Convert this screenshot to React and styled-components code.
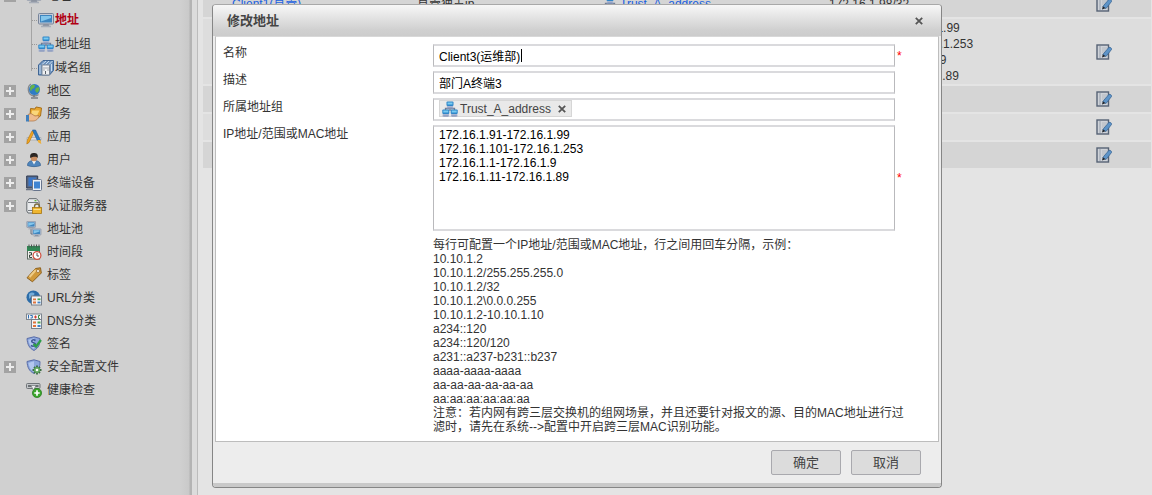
import React from "react";
import styled, { createGlobalStyle, css } from "styled-components";

const GlobalStyle = createGlobalStyle`
  * { box-sizing: border-box; }
  body {
    margin: 0;
    background: #e4e4e4;
    color: #333;
    font: 12px/14px "Liberation Sans", "Noto Sans CJK SC", sans-serif;
    overflow: hidden;
  }
`;

/* ---------- icons ---------- */

const Svg = styled.svg`
  display: block;
  flex: none;
  width: 16px;
  height: 16px;
`;

const Monitor = ({ x = 0, y = 0, s = 1 }) => (
  <g transform={`translate(${x} ${y}) scale(${s})`}>
    <rect x=".5" y="1.500" width="15" height="10.500" rx="1" fill="#c3cad6" stroke="#77849a" />
    <rect x="2" y="3" width="12" height="7.500" fill="#3f86bf" />
    <path d="M3 4h10v2L3 9.500z" fill="#84c6ec" />
    <path d="M5.500 12h5l1 2h-7z" fill="#8c93a0" />
    <path d="M3 14.500h10" stroke="#a7adb8" strokeWidth="1.500" />
  </g>
);

const MiniHost = ({ x, y }) => (
  <g transform={`translate(${x} ${y})`}>
    <rect width="7" height="4.500" rx="1" fill="#2f86c8" />
    <rect x="1" y="1" width="5" height="2" fill="#79cbf2" />
    <path d="M.5 4.500h6l.5 2.500H0z" fill="#a9b6d2" />
    <path d="M1 6.500h5" stroke="#7283ae" strokeWidth=".8" />
  </g>
);

const Shield = () => (
  <>
    <path d="M1 2.500 8 .8l6 1.700c0 6-1 9-6 12C3 12 1.500 8.500 1 2.500z" fill="#8ba6dc" stroke="#5a6da8" />
    <path d="M2.500 4 8 2.300V13C4.500 11 3 8 2.500 4z" fill="#b3c7ee" />
  </>
);

const drawings = {
  monitor: <Monitor />,
  hosts: (
    <>
      <path d="M8 7v3M3.500 9V7.500h9V9" stroke="#6f7c92" strokeWidth="1.300" fill="none" />
      <MiniHost x={4.5} y={0.5} />
      <MiniHost x={0.3} y={8.5} />
      <MiniHost x={8.7} y={8.5} />
    </>
  ),
  domains: (
    <>
      <path d="M.5 5 5 .500h10.500v10l-4 4.500H.5z" fill="#6f93bd" stroke="#3f6594" />
      <path d="M2 5v9M4 4.500l4-3.500M7.500 4.500l3.500-3.500M11 4.500l3.500-3.500M13.500 4v7" stroke="#c9dcf0" />
      <path d="M4 5h7.500v10H4z" fill="#eef0f3" stroke="#7b8696" />
      <path d="M5.500 8h1M7.500 8h1M9.500 8h1M5.500 10h1M9.500 10h1M7.500 11v3" stroke="#5a6068" />
    </>
  ),
  globe: (
    <>
      <path d="M5 1C1 3 1 12 8 13c2 0 3.500-.5 4.500-1.500" fill="none" stroke="#84888e" strokeWidth="1.300" />
      <circle cx="8.500" cy="6.500" r="5.500" fill="#2f7cc4" />
      <path d="M5 3c2-2 4-1 4 0L8 5 6 6 5 8.500C3.500 6 4 4 5 3zM10 5l3-1c.8 2.500 0 4.500-2 6L9 7.500z" fill="#67b347" />
      <path d="M8 12v2M5 15h7" stroke="#777c82" strokeWidth="1.700" />
    </>
  ),
  service: (
    <>
      <path d="M4.500 2.500l4.500.5 1-2 5.500 1-1 8-5 3.500-5.500-3z" fill="#e9a72f" stroke="#a8701a" />
      <path d="M6 4.500h7.500l-2.500 5H5z" fill="#fad67a" />
      <path d="M2 8.500l3-1 4 2.500 4-.5c0 3-3 5.500-6 5.500H2z" fill="#eebb8e" stroke="#a97446" strokeWidth=".7" />
      <path d="M0 9h3v6.500H0z" fill="#3f7fbd" />
    </>
  ),
  app: (
    <>
      <path d="M1 8.500h14v2.500H1z" fill="#dfe2e6" stroke="#999fa6" strokeWidth=".6" />
      <path d="M8 3 3 13.500 .8 15l.4-3.500L6 2z" fill="#f1a51e" stroke="#b0700c" strokeWidth=".6" />
      <path d="M6.500 1H9.500l5 10.500h-3.200z" fill="#2d7cc2" stroke="#1e5690" strokeWidth=".6" />
      <path d="M11.300 11h3.300l.7 4-3-1.500z" fill="#efb03a" />
    </>
  ),
  user: (
    <>
      <path d="M1.500 13.500c0-3.500 2.500-5 6.500-5s6.500 1.500 6.500 5c-3 1.500-10 1.500-13 0z" fill="#4f86bd" stroke="#2f5b8d" strokeWidth=".7" />
      <path d="M6 9l2 3.500L10 9z" fill="#f2f2f2" />
      <circle cx="8" cy="6" r="3.300" fill="#c98d62" />
      <path d="M4.300 6C3.500 2 5.500 1 8 1s4.500 1 3.700 5C10.500 4 7 4.500 4.300 6z" fill="#2b2623" />
    </>
  ),
  terminal: (
    <>
      <path d="M.7 1h11v12H.7z" fill="#5a6a86" stroke="#2c3850" />
      <path d="M2.500 2.500h7.500v8.500H2.500z" fill="#3a76c8" />
      <path d="M0 14.500h8" stroke="#6b7382" strokeWidth="1.500" />
      <rect x="6.500" y="4.500" width="9" height="11" rx="1" fill="#eceff4" stroke="#67748c" />
      <path d="M8 6.500h6v7H8z" fill="#3f84d2" />
    </>
  ),
  auth: (
    <>
      <path d="M3 .7h7.500l2.500 3v8.300l-2 3H2L.8 13V4z" fill="#e8eaec" stroke="#63686d" />
      <path d="M2 4.500h10M2 12.500h9" stroke="#777c81" />
      <path d="M8.500 2.700h2" stroke="#58b536" strokeWidth="1.300" />
      <path d="M8.500 10V8.500a2.500 2.500 0 0 1 5 0V10" fill="none" stroke="#7d6d40" strokeWidth="1.300" />
      <rect x="6.500" y="9.500" width="9" height="6" fill="#efb62f" stroke="#a77512" strokeWidth=".8" />
      <path d="M7.500 11.500h7" stroke="#fbdf8b" />
    </>
  ),
  pool: (
    <>
      <path d="M5 8v5h3" fill="none" stroke="#697380" />
      <Monitor x={0.500} y={-0.5} s={0.58} />
      <Monitor x={6} y={7} s={0.58} />
    </>
  ),
  calendar: (
    <>
      <rect x="1.500" y="2.500" width="12" height="12.500" fill="#f2f2ef" stroke="#5d6a61" />
      <path d="M1 2h13v5H1z" fill="#2f8753" />
      <path d="M3 .5v3M5.500.5v3M8 .5v3M10.500.5v3M13 .5v3" stroke="#4b5450" />
      <path d="M3 8.700h2.500v2.300H3.500v2.500H6" fill="none" stroke="#38463e" />
      <circle cx="11" cy="11.500" r="3.900" fill="#fff" stroke="#cf4c3c" strokeWidth="1.200" />
      <path d="M11 9v3h2" fill="none" stroke="#555" />
    </>
  ),
  tag: (
    <>
      <path d="M9.500 1.500 14.500.8 15.300 6 6.500 14.800l-5.500-4z" fill="#d19a3c" stroke="#8c5f1c" strokeLinejoin="round" />
      <path d="M9.700 3 3.500 10" stroke="#efcc86" strokeWidth="2" />
      <circle cx="12" cy="4" r="1.500" fill="#fff" stroke="#8c5f1c" strokeWidth=".7" />
    </>
  ),
  url: (
    <>
      <circle cx="7.300" cy="7.300" r="6.800" fill="#2c6ca8" />
      <path d="M3 4c3-3 7-1 5 1L5 7 3 9z" fill="#74acd8" />
      <rect x="5.500" y="6" width="10" height="9" fill="#f3f4f6" stroke="#77808c" />
      <path d="M7 9.300h3M7 12.500h3" stroke="#e0743c" strokeWidth="1.800" />
      <path d="M11.500 9.300h3" stroke="#4ba454" strokeWidth="1.800" />
      <path d="M11.500 12.500h3" stroke="#3d82c8" strokeWidth="1.800" />
    </>
  ),
  dns: (
    <>
      <rect x=".5" y="1" width="15" height="5.500" fill="#f2f3f5" stroke="#7d858f" />
      <path d="M2.500 2v3.500M4.300 2.500h2v2.500H4.500" stroke="#2f6eb5" fill="none" />
      <path d="M8 4h3M9.500 2.500v3" stroke="#d33b30" />
      <path d="M14 2.500h-1.500v3H14" stroke="#3f8c43" fill="none" />
      <rect x="5.500" y="6.500" width="10" height="9" fill="#f3f4f6" stroke="#77808c" />
      <path d="M7 9.500h3M7 13h3" stroke="#e0743c" strokeWidth="2" />
      <path d="M11.500 9.500h3" stroke="#4ba454" strokeWidth="2" />
      <path d="M11.500 13h3" stroke="#3d82c8" strokeWidth="2" />
    </>
  ),
  sign: (
    <>
      <Shield />
      <path d="M9.500 4.500C7 3 5 4.500 6 6l3 1.500c1.500 2-1.500 3.500-4 2" fill="none" stroke="#3d5594" strokeWidth="1.500" />
      <path d="M7.500 8 10 10.500 15 4" fill="none" stroke="#2e9e48" strokeWidth="2.200" />
    </>
  ),
  security: (
    <>
      <Shield />
      <path d="M11 6.500v9M6.500 11h9M8 8l6 6M14 8l-6 6" stroke="#3a6e40" strokeWidth="1.800" />
      <circle cx="11" cy="11" r="3" fill="#62a860" />
      <circle cx="11" cy="11" r="1.300" fill="#fff" />
    </>
  ),
  health: (
    <>
      <rect x=".5" y="1.500" width="13.500" height="5" rx="1" fill="#c2c5c8" stroke="#707579" />
      <path d="M2 4h3M9.500 4h3" stroke="#4f5458" strokeWidth="1.700" />
      <path d="M5 3.500h5L7.500 8.500z" fill="#eceeef" stroke="#707579" strokeWidth=".7" />
      <circle cx="11" cy="11" r="4.600" fill="#3aa62c" stroke="#25781c" strokeWidth=".7" />
      <path d="M11 8.300v5.400M8.300 11h5.400" stroke="#fff" strokeWidth="1.700" />
    </>
  ),
  edit: (
    <>
      <rect x="1" y="1" width="11.500" height="14" fill="#cfd3d9" stroke="#566274" strokeWidth="1.400" />
      <path d="M4 2v12" stroke="#98a0ac" />
      <path d="M6 4h5M6 6h4M6 8h3" stroke="#b4b9c0" />
      <path d="M12.800 3.500c1.500-.5 3 .5 2.700 2L10 12.500 6.800 10.500z" fill="#5e94c8" stroke="#3a6694" strokeWidth=".8" />
      <path d="M6.800 10.300l2.700 2L6 13.500z" fill="#1f242b" />
    </>
  ),
};

const Icon = ({ name }) => (
  <Svg viewBox="0 0 16 16" aria-hidden="true">
    {drawings[name]}
  </Svg>
);

const Cross = styled(({ className }) => (
  <svg className={className} viewBox="0 0 8 8" aria-hidden="true">
    <path d="M.8.8l6.400 6.400M7.200.8.8 7.200" stroke="currentColor" strokeWidth="1.800" />
  </svg>
))`
  display: block;
  width: 8px;
  height: 8px;
`;

/* ---------- page ---------- */

const Page = styled.div`
  display: flex;
  height: 100vh;
  overflow: hidden;
`;

const Sidebar = styled.nav`
  flex: none;
  width: 192px;
  background: linear-gradient(to right, #d0d0d0 180px, #c9c9c9 189px, #b4b4b4 190px);
`;

const Gutter = styled.div`
  flex: none;
  width: 6px;
  background: #dcdcdc;
  border-right: 1px solid #bcbcbc;
`;

const Tree = styled.ul`
  list-style: none;
  margin: -16px 0 0;
  padding: 0;
`;

const Branch = styled.ul`
  list-style: none;
  margin: 0 0 0 31px;
  padding: 0;
`;

const Node = styled.div`
  display: flex;
  align-items: center;
  height: 23px;
  padding-left: 4px;
  gap: 5px;
`;

const Toggle = styled.button`
  flex: none;
  width: 12px;
  height: 12px;
  margin-right: 5px;
  padding: 0;
  border: 0;
  background:
    linear-gradient(#ededed, #ededed) center / 8px 2px no-repeat,
    ${(p) => (p.$open ? "" : "linear-gradient(#ededed, #ededed) center / 2px 8px no-repeat,")}
    #a3a3a3;
`;

const ToggleSpace = styled.span`
  flex: none;
  width: 12px;
  margin-right: 5px;
`;

const Leaf = styled.li`
  display: flex;
  align-items: center;
  gap: 1px;
  height: 24px;
  padding-top: 2px;
  border-left: 1px solid #a4a4a4;
  ${(p) =>
    p.$last &&
    css`
      border-image: linear-gradient(#a4a4a4 16px, transparent 16px) 1;
    `}

  &::before {
    content: "";
    width: 5px;
    border-top: 1px dotted #999;
  }
`;

const NodeLink = styled.a`
  color: ${(p) => (p.$active ? "#b00014" : "#333")};
  font-weight: ${(p) => (p.$active ? "bold" : "normal")};
  text-decoration: none;
  white-space: nowrap;
`;

const Main = styled.main`
  flex: 1;
  min-width: 0;
  padding: 0 1px 0 5px;
`;

const Grid = styled.table`
  width: 100%;
  margin-top: -10px;
  border-collapse: collapse;
  table-layout: fixed;
  line-height: 16px;
`;

const Row = styled.tr`
  height: ${(p) => (p.$tall ? 67 : 28)}px;
  background: ${(p) => (p.$alt ? "#dddddd" : "#d5d5d5")};
  border-bottom: 2px solid #e4e4e4;
`;

const Cell = styled.td`
  padding: 0 0 0 6px;
  vertical-align: middle;
  white-space: nowrap;
`;

const GroupRef = styled.span`
  display: flex;
  align-items: center;
  gap: 2px;
`;

const TableLink = styled.a`
  color: #1a5fe0;
`;

const IconButton = styled.button`
  display: block;
  padding: 0;
  border: 0;
  background: none;
  color: #555;
`;

/* ---------- dialog ---------- */

const Overlay = styled.div`
  position: absolute;
  inset: 0;
  display: flex;
  justify-content: center;
  align-items: flex-start;
  padding: 4px 0 0 2px;
`;

const Dialog = styled.section`
  width: 730px;
  max-width: 100%;
  background: #ededed;
  border: 1px solid #868686;
  border-top-color: #a8a8a8;
  border-radius: 4px;
  overflow: hidden;
`;

const DialogHeader = styled.header`
  display: flex;
  align-items: center;
  justify-content: space-between;
  height: 31px;
  padding: 0 18px 0 14px;
  background: linear-gradient(#f7f7f7, #d0d0d0 80%, #cccccc);
`;

const Title = styled.h1`
  margin: 0;
  color: #444;
  font-size: 13px;
  line-height: 20px;
`;

const Form = styled.form`
  margin: 0;
`;

const Fields = styled.div`
  display: grid;
  grid-template-columns: 210px minmax(0, 1fr) 12px;
  row-gap: 4px;
  margin: 0 2px;
  padding: 7px 31px 7px 7px;
  background: #fff;
  border: 1px solid #bdbdbd;
  border-top-color: #d8d8d8;
`;

const Label = styled.label`
  grid-column: 1;
  line-height: 18px;
`;

const box = css`
  display: block;
  width: 100%;
  border: 1px solid #b9b9bc;
  border-width: 2px 1px;
  border-top-color: #dadadd;
  border-bottom-color: #dadadd;
  border-radius: 0;
  background: #fff;
  color: #000;
  font: inherit;
  outline: none;
`;

const TextInput = styled.input`
  ${box}
  height: 23px;
  padding: 0 5px;
  ${(p) =>
    p.$caret &&
    css`
      caret-color: transparent;
      background: linear-gradient(#000, #000) 87px 3px / 1px 13px no-repeat #fff;
    `}
`;

const TagBox = styled.div`
  ${box}
  height: 23px;
  padding: 0 5px;
`;

const TextArea = styled.textarea`
  ${box}
  height: 106px;
  padding: 1px 5px;
  resize: none;
`;

const Tag = styled.span`
  display: inline-flex;
  align-items: center;
  gap: 2px;
  height: 17px;
  padding: 0 5px 0 2px;
  border: 1px solid #d6d6d6;
  background: #e9e9e9;
  color: #444;

  button {
    margin-left: 5px;
  }
`;

const Required = styled.span`
  align-self: center;
  padding-left: 2px;
  color: #f00;
`;

const Help = styled.div`
  grid-column: 2 / 4;
  padding-top: 3px;

  p {
    margin: 0;
  }
`;

const Footer = styled.footer`
  display: flex;
  justify-content: flex-end;
  gap: 10px;
  padding: 8px 20px 8px;
  border-bottom: 4px solid #c9c9c9;
`;

const Button = styled.button`
  width: 70px;
  height: 25px;
  padding: 0;
  border: 1px solid #a9a9ae;
  border-radius: 2px;
  background: #dcdcdc;
  color: #444;
  font: inherit;
  font-size: 13px;
`;

const treeLeaves = [
  ["monitor", "地址"],
  ["hosts", "地址组"],
  ["domains", "域名组"],
];

const treeNodes = [
  ["globe", "地区", true],
  ["service", "服务", true],
  ["app", "应用", true],
  ["user", "用户", true],
  ["terminal", "终端设备", true],
  ["auth", "认证服务器", true],
  ["pool", "地址池"],
  ["calendar", "时间段"],
  ["tag", "标签"],
  ["url", "URL分类"],
  ["dns", "DNS分类"],
  ["sign", "签名"],
  ["security", "安全配置文件", true],
  ["health", "健康检查"],
];

const ranges = [
  "172.16.1.91-172.16.1.99",
  "172.16.1.101-172.16.1.253",
  "172.16.1.1-172.16.1.9",
  "172.16.1.11-172.16.1.89",
];

const rows = [
  { name: "Client1(直管)", desc: "直管独占ip", group: "Trust_A_address", ips: ["172.16.1.98/32"] },
  { ips: ranges },
  { ips: [] },
  { ips: [] },
  { ips: [] },
];

const examples = [
  "每行可配置一个IP地址/范围或MAC地址，行之间用回车分隔，示例：",
  "10.10.1.2",
  "10.10.1.2/255.255.255.0",
  "10.10.1.2/32",
  "10.10.1.2\\0.0.0.255",
  "10.10.1.2-10.10.1.10",
  "a234::120",
  "a234::120/120",
  "a231::a237-b231::b237",
  "aaaa-aaaa-aaaa",
  "aa-aa-aa-aa-aa-aa",
  "aa:aa:aa:aa:aa:aa",
  "注意：若内网有跨三层交换机的组网场景，并且还要针对报文的源、目的MAC地址进行过滤时，请先在系统-->配置中开启跨三层MAC识别功能。",
];

function TreeNode({ icon, text, expandable, open }) {
  return (
    <Node>
      {expandable ? <Toggle type="button" $open={open} aria-label={text} /> : <ToggleSpace />}
      <Icon name={icon} />
      <NodeLink href="#">{text}</NodeLink>
    </Node>
  );
}

function AddressTable() {
  return (
    <Grid>
      <colgroup>
        <col style={{ width: 23 }} />
        <col style={{ width: 185 }} />
        <col style={{ width: 185 }} />
        <col style={{ width: 227 }} />
        <col />
        <col style={{ width: 61 }} />
      </colgroup>
      <tbody>
        {rows.map((row, i) => (
          <Row key={i} $alt={i % 2 === 1} $tall={row.ips.length > 1}>
            <Cell />
            <Cell>{row.name && <TableLink href="#">{row.name}</TableLink>}</Cell>
            <Cell>{row.desc}</Cell>
            <Cell>
              {row.group && (
                <GroupRef>
                  <Icon name="hosts" />
                  <TableLink href="#">{row.group}</TableLink>
                </GroupRef>
              )}
            </Cell>
            <Cell>
              {row.ips.map((ip) => (
                <div key={ip}>{ip}</div>
              ))}
            </Cell>
            <Cell>
              <IconButton type="button" aria-label="编辑">
                <Icon name="edit" />
              </IconButton>
            </Cell>
          </Row>
        ))}
      </tbody>
    </Grid>
  );
}

function EditDialog() {
  return (
    <Overlay>
      <Dialog role="dialog" aria-labelledby="dialog-title">
        <DialogHeader>
          <Title id="dialog-title">修改地址</Title>
          <IconButton type="button" aria-label="关闭">
            <Cross />
          </IconButton>
        </DialogHeader>
        <Form>
          <Fields>
            <Label htmlFor="name">名称</Label>
            <TextInput id="name" defaultValue="Client3(运维部)" $caret />
            <Required>*</Required>

            <Label htmlFor="desc">描述</Label>
            <TextInput id="desc" defaultValue="部门A终端3" />
            <span />

            <Label as="span" id="group-label">所属地址组</Label>
            <TagBox role="group" aria-labelledby="group-label">
              <Tag>
                <Icon name="hosts" />
                Trust_A_address
                <IconButton type="button" aria-label="移除">
                  <Cross />
                </IconButton>
              </Tag>
            </TagBox>
            <span />

            <Label htmlFor="ranges">IP地址/范围或MAC地址</Label>
            <TextArea id="ranges" defaultValue={ranges.join("\n")} />
            <Required>*</Required>

            <Help>
              {examples.map((line) => (
                <p key={line}>{line}</p>
              ))}
            </Help>
          </Fields>
          <Footer>
            <Button type="submit">确定</Button>
            <Button type="button">取消</Button>
          </Footer>
        </Form>
      </Dialog>
    </Overlay>
  );
}

export default function App() {
  return (
    <>
      <GlobalStyle />
      <Page>
        <Sidebar>
          <Tree>
            <li>
              <TreeNode icon="monitor" text="地址" expandable open />
              <Branch>
                {treeLeaves.map(([icon, text], i) => (
                  <Leaf key={text} $last={i === 2}>
                    <Icon name={icon} />
                    <NodeLink href="#" $active={i === 0}>{text}</NodeLink>
                  </Leaf>
                ))}
              </Branch>
            </li>
            {treeNodes.map(([icon, text, expandable]) => (
              <li key={text}>
                <TreeNode icon={icon} text={text} expandable={expandable} />
              </li>
            ))}
          </Tree>
        </Sidebar>
        <Gutter />
        <Main>
          <AddressTable />
        </Main>
      </Page>
      <EditDialog />
    </>
  );
}
